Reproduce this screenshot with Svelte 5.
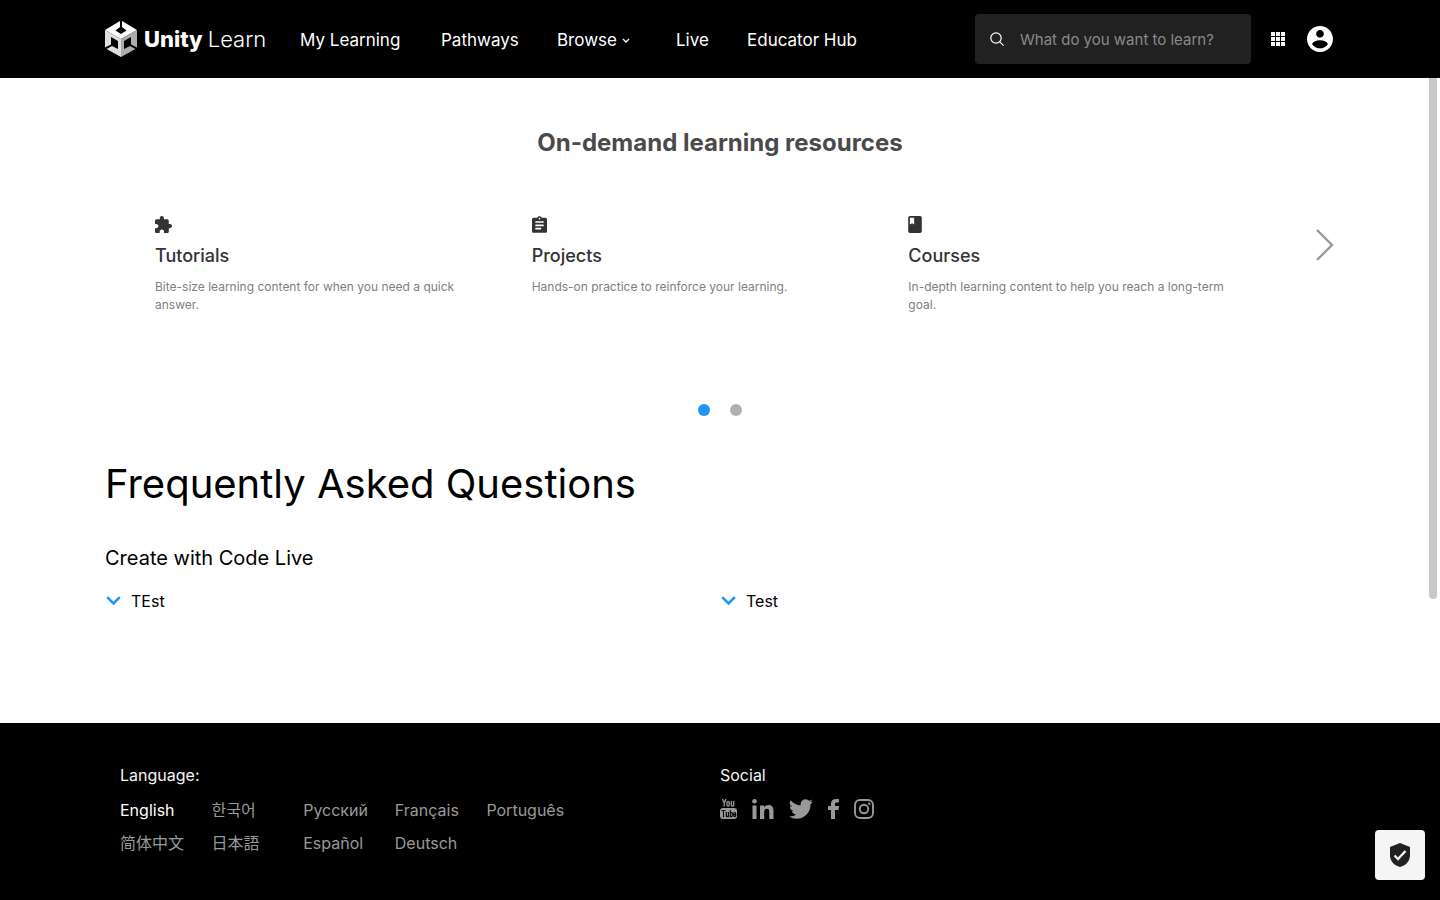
<script>
  const cards = [
    { icon: 'puzzle', title: 'Tutorials', text: 'Bite-size learning content for when you need a quick answer.' },
    { icon: 'clipboard', title: 'Projects', text: 'Hands-on practice to reinforce your learning.' },
    { icon: 'book', title: 'Courses', text: 'In-depth learning content to help you reach a long-term goal.' }
  ];
  const icons = {
    puzzle: 'M20.5 11H19V7c0-1.1-.9-2-2-2h-4V3.5C13 2.12 11.88 1 10.5 1S8 2.12 8 3.5V5H4c-1.1 0-1.99.9-1.99 2v3.8H3.5c1.49 0 2.7 1.21 2.7 2.7s-1.21 2.7-2.7 2.7H2V20c0 1.1.9 2 2 2h3.8v-1.5c0-1.49 1.21-2.7 2.7-2.7s2.7 1.21 2.7 2.7V22H17c1.1 0 2-.9 2-2v-4h1.5c1.38 0 2.5-1.12 2.5-2.5S21.88 11 20.5 11z',
    clipboard: 'M19 3h-4.18C14.4 1.84 13.3 1 12 1s-2.4.84-2.82 2H5c-1.1 0-2 .9-2 2v14c0 1.1.9 2 2 2h14c1.1 0 2-.9 2-2V5c0-1.1-.9-2-2-2zm-7 0c.55 0 1 .45 1 1s-.45 1-1 1-1-.45-1-1 .45-1 1-1zm2 14H7v-2h7v2zm3-4H7v-2h10v2zm0-4H7V7h10v2z',
    book: 'M18 2H6c-1.1 0-2 .9-2 2v16c0 1.1.9 2 2 2h12c1.1 0 2-.9 2-2V4c0-1.1-.9-2-2-2zM6 4h5v8l-2.5-1.5L6 12V4z'
  };
  const boxes = { puzzle: '2 1 21 21', clipboard: '3 1 18 20', book: '4 2 16 20' };
  const widths = { puzzle: 17, clipboard: 15, book: 14 };
  const languages = [
    ['English', 'en'], ['한국어', 'ko'], ['Русский', 'ru'], ['Français', 'fr'], ['Português', 'pt'],
    ['简体中文', 'zh-CN'], ['日本語', 'ja'], ['Español', 'es'], ['Deutsch', 'de']
  ];
  const questions = ['TEst', 'Test'];
  let slide = $state(0);
</script>

<div class="page">
  <header>
    <a class="logo" href="#home" aria-label="Unity Learn">
      <svg width="32" height="36" viewBox="0 0 32 36">
        <path fill="#fff" d="M15 0v6l-4.500 3.500L16 13l5.500-3.500L17 6V0l15 9-16 9L0 9z" />
        <path fill="#dedede" d="M0 9l16 9v18L1.500 28 7 25l6 3v-8l-7-4v7.500l-6 3z" />
        <path fill="#acacac" d="M32 9l-16 9v18l14.500-8-5.500-3-6 3v-8l7-4v7.500l6 3z" />
      </svg>
      <span class="unity">Unity</span><span class="learn">Learn</span>
    </a>
    <nav aria-label="Main">
      <a href="#my">My Learning</a>
      <a href="#pathways">Pathways</a>
      <button type="button">Browse
        <svg width="8" height="5" viewBox="0 0 8 5"><path d="M1 1l3 3 3-3" fill="none" stroke="#fff" stroke-width="1.300" /></svg>
      </button>
      <a href="#live">Live</a>
      <a href="#educators">Educator Hub</a>
    </nav>
    <label class="search">
      <svg width="14" height="14" viewBox="0 0 14 14" fill="none" stroke="#fff" stroke-width="1.200"><circle cx="6" cy="6" r="5.200" /><path d="M9.800 9.800l3.800 3.800" /></svg>
      <input type="search" aria-label="Search" placeholder="What do you want to learn?" />
    </label>
    <button class="apps" type="button" aria-label="Apps">
      <svg width="14" height="14" viewBox="0 0 14 14" fill="#fff">
        {#each [0, 5, 10] as y}{#each [0, 5, 10] as x}<rect {x} {y} width="4" height="4" />{/each}{/each}
      </svg>
    </button>
    <button class="account" type="button" aria-label="Account">
      <svg width="26" height="26" viewBox="2 2 20 20" fill="#fff"><path d="M12 2C6.480 2 2 6.480 2 12s4.480 10 10 10 10-4.480 10-10S17.520 2 12 2zm0 3c1.660 0 3 1.340 3 3s-1.340 3-3 3-3-1.340-3-3 1.340-3 3-3zm0 14.200c-2.500 0-4.710-1.280-6-3.220.03-1.990 4-3.080 6-3.080 1.990 0 5.970 1.090 6 3.080-1.290 1.940-3.500 3.220-6 3.220z" /></svg>
    </button>
  </header>

  <main>
    <section class="resources">
      <h2>On-demand learning resources</h2>
      <div class="carousel">
        <div class="cards">
          {#each cards as card}
            <article>
              <svg width={widths[card.icon]} height="17" viewBox={boxes[card.icon]} fill="#333"><path d={icons[card.icon]} /></svg>
              <h3>{card.title}</h3>
              <p>{card.text}</p>
            </article>
          {/each}
        </div>
        <button class="next" type="button" aria-label="Next" onclick={() => (slide = 1 - slide)}>
          <svg width="19" height="32" viewBox="0 0 19 32"><path d="M1 1l15 15L1 31" fill="none" stroke="#999" stroke-width="2.400" /></svg>
        </button>
      </div>
      <div class="dots">
        {#each [0, 1] as n}
          <button type="button" class:active={slide === n} aria-label="Slide {n + 1}" onclick={() => (slide = n)}></button>
        {/each}
      </div>
    </section>

    <section class="faq">
      <h1>Frequently Asked Questions</h1>
      <h4>Create with Code Live</h4>
      <div class="questions">
        {#each questions as q}
          <button type="button">
            <svg width="15" height="11" viewBox="0 0 15 11"><path d="M1.200 1.200l6.300 6.300 6.300-6.300" fill="none" stroke="#2196f3" stroke-width="2.600" /></svg>
            {q}
          </button>
        {/each}
      </div>
    </section>
    <div class="scrollbar"></div>
  </main>

  <footer>
    <div>
      <h5>Language:</h5>
      <div class="languages">
        {#each languages as [name, code], i}
          <a href="#{code}" lang={code} class:current={i === 0}>{name}</a>
        {/each}
      </div>
    </div>
    <div>
      <h5>Social</h5>
      <div class="social">
        <a href="#youtube" aria-label="YouTube">
          <svg width="17" height="20" viewBox="0 0 17 20" fill="none" stroke="#999" stroke-width="1.300">
            <path d="M2.500 0l1.700 4v3.500M6 0L4.200 4" /><rect x="7" y="2.600" width="2.200" height="4.500" rx="1" /><path d="M11.300 2v4.200q0 1 1 .9 1-.2 1.300-1M13.700 2v5.600" />
            <rect x="0" y="9" width="17" height="11" rx="3" fill="#999" stroke="none" />
            <path stroke="#000" stroke-width="1.100" d="M1.500 11.500h4M3.500 11.500v6.700M6.300 13v4q0 .8.800.7.800-.1 1-.8M8.400 13v5.200M10.300 11v7.200M10.300 14q2-1 2 .6v2q0 1.500-2 .8M15.700 16.300q0 1.500-1 1.500t-1-1.500v-1.500q0-1.300 1-1.300t1 1.300v.8h-2" />
          </svg>
        </a>
        <a href="#linkedin" aria-label="LinkedIn">
          <svg width="22" height="20" viewBox="0 0 22 20" fill="#999"><circle cx="2.500" cy="2.300" r="2.300" /><path d="M.5 6.500h4V20h-4zM8 6.500h4v1.900c.8-1.400 2.200-2.300 4.300-2.300 4.200 0 5.200 2.700 5.200 6.300V20h-4.200v-6.800c0-1.700-.3-3.500-2.400-3.500s-2.700 1.700-2.700 3.400V20H8z" /></svg>
        </a>
        <a href="#twitter" aria-label="Twitter">
          <svg width="24" height="20" viewBox="0 2 24 20" fill="#999"><path d="M23.950 4.570a10 10 0 0 1-2.820.77 4.960 4.960 0 0 0 2.160-2.720c-.95.55-2 .96-3.130 1.180a4.920 4.920 0 0 0-8.380 4.480C7.690 8.090 4.070 6.130 1.640 3.160a4.920 4.920 0 0 0 1.520 6.570 4.900 4.900 0 0 1-2.230-.61v.06a4.920 4.920 0 0 0 3.950 4.830 5 5 0 0 1-2.210.08 4.940 4.940 0 0 0 4.600 3.420A9.870 9.870 0 0 1 0 19.540a14 14 0 0 0 7.550 2.210c9.050 0 14-7.500 14-13.980 0-.21 0-.42-.02-.63a9.940 9.940 0 0 0 2.420-2.570z" /></svg>
        </a>
        <a href="#facebook" aria-label="Facebook">
          <svg width="11" height="20" viewBox="0 0 11 20" fill="#999"><path d="M3 20v-9H0V7h3V5c0-3.300 1.700-5 5-5h3v3.500H9C7.500 3.500 7 4 7 5.300V7h4l-.5 4H7v9z" /></svg>
        </a>
        <a href="#instagram" aria-label="Instagram">
          <svg width="20" height="20" viewBox="0 0 20 20" fill="none" stroke="#999" stroke-width="1.900"><rect x="1" y="1" width="18" height="18" rx="5" /><circle cx="10" cy="10" r="4.200" /><circle cx="15.300" cy="4.700" r="1.200" fill="#999" stroke="none" /></svg>
        </a>
      </div>
    </div>
  </footer>

  <button class="privacy" type="button" aria-label="Privacy settings">
    <svg width="20" height="24" viewBox="0 0 20 24"><path d="M10 0L0 4v8c0 6 4 10.500 10 12 6-1.500 10-6 10-12V4z" fill="#212121" /><path d="M4.500 12.500l3.500 3.500 7.500-8" fill="none" stroke="#f5f5f5" stroke-width="2.400" /></svg>
  </button>
</div>

<style>
  :global(body) { margin: 0; background: #fff; }
  .page { position: relative; display: flex; flex-direction: column; min-height: 100vh; font-family: Inter, "Noto Sans CJK SC", sans-serif; font-size: 16px; color: #000; }
  .page :global(*) { box-sizing: border-box; }
  svg { display: block; flex: none; }
  a { color: inherit; text-decoration: none; }
  button { padding: 0; border: 0; background: none; font: inherit; color: inherit; cursor: pointer; }
  h1, h2, h3, h4, h5, p { margin: 0; }

  header { display: flex; align-items: center; height: 78px; padding: 0 107px 0 105px; background: #000; color: #fff; }
  .logo { display: flex; align-items: center; width: 195px; font-size: 22px; }
  .unity { margin-left: 7px; font-weight: 800; }
  .learn { margin-left: 5px; font-weight: 300; }
  nav { display: grid; grid-template-columns: 141px 116px 119px 71px auto; align-items: center; padding-top: 2px; font-size: 17px; line-height: 24px; white-space: nowrap; }
  nav button { display: flex; align-items: center; gap: 5px; }
  .search { display: flex; align-items: center; gap: 16px; width: 276px; height: 50px; margin-left: auto; padding: 0 15px; border-radius: 4px; background: #212121; }
  .search input { flex: 1; min-width: 0; padding: 0; border: 0; outline: 0; background: none; color: #fff; font: inherit; font-size: 15px; }
  .search input::placeholder { color: #8a8a8a; opacity: 1; }
  .apps { margin-left: 20px; }
  .account { margin-left: 22px; }

  main { position: relative; flex: 1; padding: 49px 105px 0; }
  h2 { font-size: 24px; line-height: 32px; font-weight: 700; text-align: center; color: #4a4a4a; }
  .carousel { display: flex; align-items: flex-start; margin-top: 57px; }
  .cards { flex: 1; display: grid; grid-template-columns: repeat(3, 1fr); padding: 0 50px; min-height: 188px; }
  article { padding-right: 50px; }
  h3 { margin-top: 9px; font-size: 18px; line-height: 28px; font-weight: 500; color: #333; }
  article p { margin-top: 8px; font-size: 12px; line-height: 18px; color: #808080; }
  .next { margin: 13px 0 0 -19px; }
  .dots { display: flex; justify-content: center; gap: 20px; }
  .dots button { width: 12px; height: 12px; border-radius: 50%; background: #b0b0b0; }
  .dots .active { background: #2196f3; }
  h1 { margin-top: 44px; font-size: 40px; line-height: 48px; font-weight: 400; }
  h4 { margin-top: 36px; font-size: 20px; line-height: 28px; font-weight: 400; }
  .questions { display: grid; grid-template-columns: 1fr 1fr; margin-top: 17px; }
  .questions button { display: flex; align-items: center; gap: 10px; padding-left: 1px; line-height: 24px; }
  .scrollbar { position: absolute; top: 0; right: 3px; width: 8px; height: 521px; border-radius: 0 0 4px 4px; background: #c8c8c8; }

  footer { display: grid; grid-template-columns: 1fr 1fr; min-height: 177px; padding: 40px 120px 0; background: #000; color: #f5f5f5; }
  h5 { font-size: 16px; line-height: 24px; font-weight: 400; }
  .languages { display: grid; grid-template-columns: repeat(5, 1fr); max-width: 458px; margin-top: 7px; line-height: 33px; color: #999; }
  .current { color: #fff; }
  .social { display: flex; gap: 15px; margin-top: 12px; }
  .privacy { position: absolute; right: 15px; bottom: 20px; display: grid; place-items: center; width: 50px; height: 50px; border-radius: 4px; background: #f5f5f5; }
</style>
